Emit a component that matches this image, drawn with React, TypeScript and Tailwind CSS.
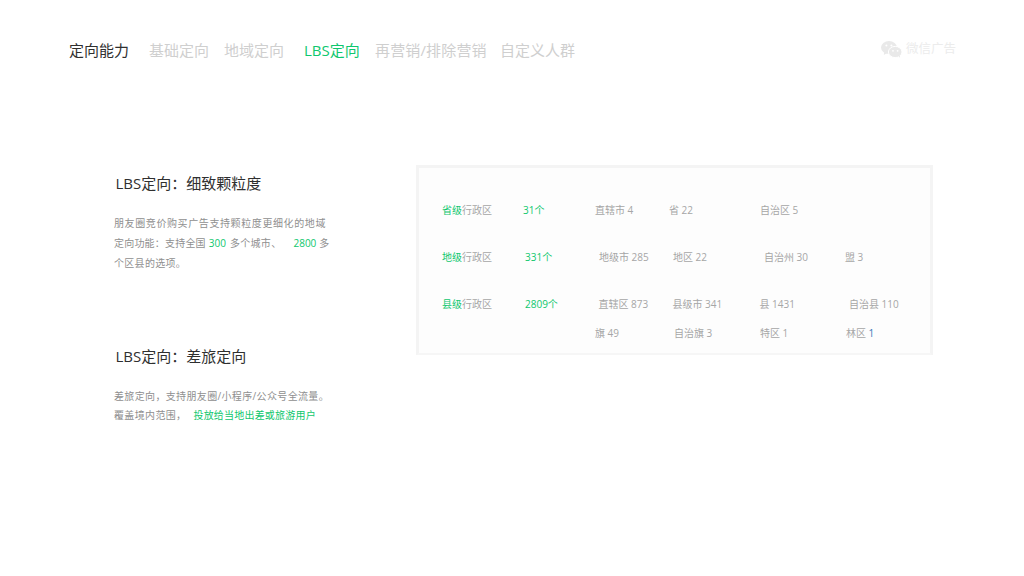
import React from "react";

const font = "font-['Open_Sans','Noto_Sans_CJK_SC',sans-serif]";

const navItems = [
  { label: "定向能力", className: "w-[80px] text-[#2f2f2f]" },
  { label: "基础定向", className: "w-[75px] text-[#cfcfcf]" },
  { label: "地域定向", className: "w-[80px] text-[#cfcfcf]" },
  { label: "LBS定向", className: "w-[71px] text-[#0fc76e]" },
  { label: "再营销/排除营销", className: "w-[125px] tracking-[0.15px] text-[#cfcfcf]" },
  { label: "自定义人群", className: "w-[80px] text-[#cfcfcf]" },
];

type Cell = { text: string; w: string };

const rows: { level: string; levelW: string; count: string; countW: string; cells: Cell[] }[] = [
  {
    level: "省级",
    levelW: "w-[81px]",
    count: "31个",
    countW: "w-[72px]",
    cells: [
      { text: "直辖市 4", w: "w-[74px]" },
      { text: "省 22", w: "w-[91px]" },
      { text: "自治区 5", w: "w-[86px]" },
    ],
  },
  {
    level: "地级",
    levelW: "w-[83px]",
    count: "331个",
    countW: "w-[74px]",
    cells: [
      { text: "地级市 285", w: "w-[74px]" },
      { text: "地区 22", w: "w-[91px]" },
      { text: "自治州 30", w: "w-[81px]" },
      { text: "盟 3", w: "w-[60px]" },
    ],
  },
  {
    level: "县级",
    levelW: "w-[83px]",
    count: "2809个",
    countW: "w-[73.5px]",
    cells: [
      { text: "直辖区 873", w: "w-[74px]" },
      { text: "县级市 341", w: "w-[87px]" },
      { text: "县 1431", w: "w-[89.5px]" },
      { text: "自治县 110", w: "w-[60px]" },
    ],
  },
];

function WechatLogo() {
  return (
    <svg width="21" height="17" viewBox="0 0 21 17" className="shrink-0">
      <ellipse cx="8" cy="6.5" rx="8" ry="6.5" fill="#e9e9e9" />
      <path d="M3.2 10.5 2.8 14l3.4-2z" fill="#e9e9e9" />
      <ellipse cx="14.2" cy="11" rx="6.8" ry="5.6" fill="#e9e9e9" stroke="#ffffff" strokeWidth="1" />
      <path d="M17.5 15l1.6 2-.2-3z" fill="#e9e9e9" />
      <circle cx="5.4" cy="4.6" r="1" fill="#ffffff" />
      <circle cx="10.4" cy="4.6" r="1" fill="#ffffff" />
      <circle cx="12" cy="9.8" r="0.9" fill="#ffffff" />
      <circle cx="16.6" cy="9.8" r="0.9" fill="#ffffff" />
    </svg>
  );
}

function LevelRow({ level, levelW, count, countW, cells }: (typeof rows)[number]) {
  return (
    <div className="flex h-[47px] items-center">
      <span className={`${levelW} shrink-0 text-[10px]`}>
        <span className="text-[#0fc76e]">{level}</span>
        <span className="text-[#a6a6a6]">行政区</span>
      </span>
      <span className={`${countW} shrink-0 text-[10px] text-[#0fc76e]`}>{count}</span>
      {cells.map((c) => (
        <span key={c.text} className={`${c.w} shrink-0 text-[10px] text-[#a6a6a6]`}>
          {c.text}
        </span>
      ))}
    </div>
  );
}

export default function App() {
  return (
    <div className={`h-[576px] w-[1024px] overflow-hidden bg-white ${font}`}>
      <header className="flex h-[102px] items-start justify-between pl-[69px] pr-[68px] pt-[39px]">
        <nav className="flex text-[15px] leading-[22px]">
          {navItems.map((item) => (
            <span key={item.label} className={`shrink-0 ${item.className}`}>
              {item.label}
            </span>
          ))}
        </nav>
        <div className="mt-[1px] flex items-center gap-[4px] text-[12.5px] leading-[18px] text-[#ececec]">
          <WechatLogo />
          <span>微信广告</span>
        </div>
      </header>

      <main className="mt-[63px] flex pl-[114px]">
        <div className="w-[302px] shrink-0">
          <section className="h-[171px]">
            <h2 className="pl-[1.5px] pt-[7px] text-[15px] font-normal leading-[22px] text-[#2f2f2f]">
              LBS定向：细致颗粒度
            </h2>
            <p className="mt-[19px] whitespace-nowrap text-[10px] leading-[20px] tracking-[0.6px] text-[#8f8f8f]">
              朋友圈竞价购买广告支持颗粒度更细化的地域
              <br />
              <span className="tracking-[0.2px]">定向功能：支持全国</span>
              <span className="ml-[3px] tracking-normal text-[#0fc76e]">300</span>
              <span className="ml-[4px] tracking-[0.3px]">多个城市、</span>
              <span className="ml-[12px] tracking-normal text-[#0fc76e]">2800</span>
              <span className="ml-[3px]">多</span>
              <br />
              <span className="tracking-[0.3px]">个区县的选项。</span>
            </p>
          </section>
          <section>
            <h2 className="pl-[1.5px] pt-[9px] text-[15px] font-normal leading-[22px] text-[#2f2f2f]">
              LBS定向：差旅定向
            </h2>
            <p className="mt-[20px] whitespace-nowrap text-[10px] leading-[19px] tracking-[0.35px] text-[#8f8f8f]">
              差旅定向，支持朋友圈/小程序/公众号全流量。
              <br />
              覆盖境内范围，
              <span className="ml-[7px] tracking-[0.2px] text-[#0fc76e]">投放给当地出差或旅游用户</span>
            </p>
          </section>
        </div>

        <div className="h-[190px] w-[517px] shrink-0 border-[3px] border-b-2 border-[#f4f4f4] border-b-[#f6f6f6] bg-[#fdfdfd] pl-[23px] pt-[19px]">
          {rows.map((r) => (
            <LevelRow key={r.level} {...r} />
          ))}
          <div className="flex h-[10px] items-center pl-[153px] text-[10px] text-[#a6a6a6]">
            <span className="w-[79px] shrink-0">旗 49</span>
            <span className="w-[86px] shrink-0">自治旗 3</span>
            <span className="w-[86px] shrink-0">特区 1</span>
            <span className="shrink-0">
              林区 <span className="text-[#3b78b8]">1</span>
            </span>
          </div>
        </div>
      </main>
    </div>
  );
}
